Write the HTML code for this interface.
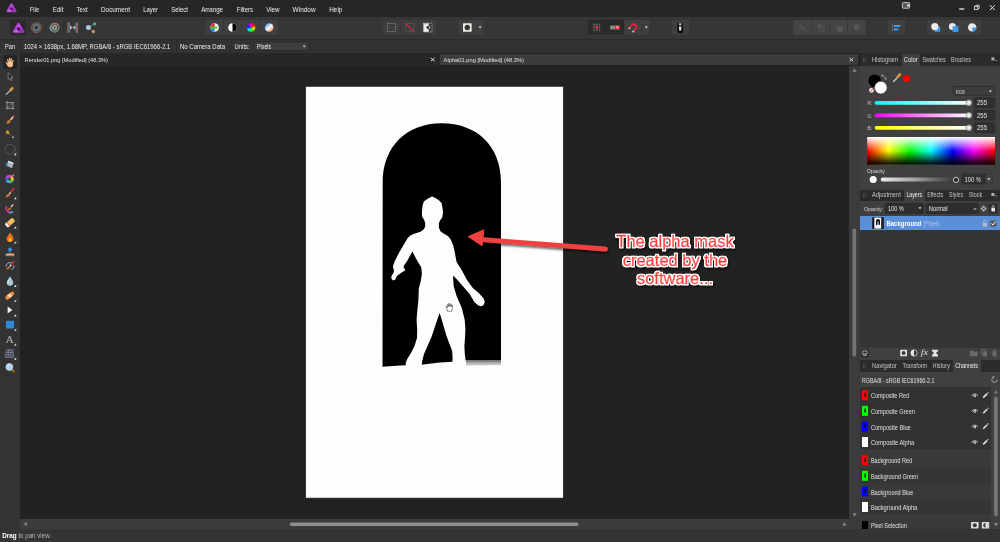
<!DOCTYPE html>
<html lang="en"><head><meta charset="utf-8"><title>Affinity Photo</title>
<style>
*{box-sizing:border-box;margin:0;padding:0}
html,body{width:1000px;height:542px;overflow:hidden;background:#222;font-family:"Liberation Sans",sans-serif}
#app{position:relative;width:1000px;height:542px;overflow:hidden;background:#222}
.a{position:absolute}
svg{position:absolute;left:0;top:0;overflow:hidden;will-change:transform}
svg text{white-space:pre}
</style></head><body><div id="app">
<div class="a" style="left:20px;top:53px;width:840px;height:476px;background:#222222"></div>
<div class="a" style="left:20px;top:53px;width:419px;height:12.6px;background:#272727"></div>
<div class="a" style="left:849px;top:66px;width:11px;height:453px;background:#3b3b3b"></div>
<div class="a" style="left:20px;top:519px;width:829px;height:10px;background:#3c3c3c"></div>
<div class="a" style="left:849px;top:519px;width:11px;height:10px;background:#3b3b3b"></div>
<div class="a" style="left:0px;top:529px;width:1000px;height:13px;background:#343434"></div>
<div class="a" style="left:0px;top:0px;width:1000px;height:17px;background:#262626"></div>
<div class="a" style="left:0px;top:17px;width:1000px;height:21.5px;background:#363636"></div>
<div class="a" style="left:0px;top:38.5px;width:1000px;height:1px;background:#2a2a2a"></div>
<div class="a" style="left:0px;top:39.5px;width:1000px;height:13.5px;background:#323232"></div>
<div class="a" style="left:0px;top:53px;width:20px;height:476px;background:#333333"></div>
<div class="a" style="left:860px;top:53px;width:140px;height:476px;background:#404040"></div>
<div class="a" style="left:860px;top:53px;width:140px;height:12.6px;background:#2b2b2b"></div>
<div class="a" style="left:901.6px;top:53.6px;width:18.6px;height:12px;background:#404040"></div>
<div class="a" style="left:860px;top:189.6px;width:140px;height:11.4px;background:#2b2b2b"></div>
<div class="a" style="left:904px;top:190px;width:21px;height:11px;background:#404040"></div>
<div class="a" style="left:860px;top:216px;width:140px;height:132.4px;background:#353535"></div>
<div class="a" style="left:860px;top:216px;width:140px;height:14.2px;background:#5b8fd8"></div>
<div class="a" style="left:860px;top:348.4px;width:140px;height:11.4px;background:#404040"></div>
<div class="a" style="left:860px;top:359.8px;width:140px;height:12px;background:#2b2b2b"></div>
<div class="a" style="left:953px;top:360.2px;width:28px;height:11.6px;background:#404040"></div>
<div class="a" style="left:860px;top:387.2px;width:130.6px;height:141.8px;background:#323232"></div>
<div class="a" style="left:860px;top:450px;width:130.6px;height:2.4px;background:#3c3c3c"></div>
<div class="a" style="left:860px;top:452.4px;width:130.6px;height:15.6px;background:#3a3a3a"></div>
<div class="a" style="left:860px;top:468px;width:130.6px;height:15.6px;background:#353535"></div>
<div class="a" style="left:860px;top:483.6px;width:130.6px;height:15.6px;background:#3a3a3a"></div>
<div class="a" style="left:860px;top:499.2px;width:130.6px;height:16px;background:#353535"></div>
<div class="a" style="left:860px;top:517.8px;width:130.6px;height:11.2px;background:#3a3a3a"></div>
<div class="a" style="left:860px;top:515.2px;width:130.6px;height:2.6px;background:#3c3c3c"></div>
<svg width="1000" height="542" viewBox="0 0 1000 542" font-family="'Liberation Sans',sans-serif">
<defs>
  <filter id="ol" x="-10%" y="-20%" width="120%" height="150%"><feMorphology in="SourceAlpha" operator="dilate" radius="1.1" result="d"/><feGaussianBlur in="d" stdDeviation="0.35" result="d2"/><feComponentTransfer in="d2" result="d3"><feFuncA type="linear" slope="1.6"/></feComponentTransfer><feFlood flood-color="#ffffff"/><feComposite in2="d3" operator="in" result="w"/><feGaussianBlur in="d" stdDeviation="1.2"/><feOffset dx="1" dy="1.5"/><feComponentTransfer result="s"><feFuncA type="linear" slope="0.6"/></feComponentTransfer><feMerge><feMergeNode in="s"/><feMergeNode in="w"/><feMergeNode in="SourceGraphic"/></feMerge></filter>
  <linearGradient id="gb2" x1="0" y1="0" x2="0" y2="1"><stop offset="0" stop-color="#6a6a6a"/><stop offset="0.45" stop-color="#b4b4b4"/><stop offset="1" stop-color="#c8c8c8"/></linearGradient>
  <filter id="sh" x="-20%" y="-50%" width="140%" height="220%"><feGaussianBlur in="SourceAlpha" stdDeviation="1.2"/><feOffset dx="1" dy="1.5"/><feComponentTransfer><feFuncA type="linear" slope="0.6"/></feComponentTransfer><feMerge><feMergeNode/><feMergeNode in="SourceGraphic"/></feMerge></filter>
  <filter id="bl"><feGaussianBlur stdDeviation="0.45"/></filter>
<filter id="b3" x="-10%" y="-10%" width="120%" height="120%"><feGaussianBlur stdDeviation="0.3"/></filter><linearGradient id="wb" x1="0.15" y1="0.1" x2="0.85" y2="0.9"><stop offset="0" stop-color="#3b9cf0"/><stop offset="0.5" stop-color="#fdfdfd"/><stop offset="1" stop-color="#f08a3c"/></linearGradient><linearGradient id="gr"><stop offset="0" stop-color="#00ffff"/><stop offset="1" stop-color="#ffffff"/></linearGradient>
<linearGradient id="gg"><stop offset="0" stop-color="#ff00ff"/><stop offset="1" stop-color="#ffffff"/></linearGradient>
<linearGradient id="gb"><stop offset="0" stop-color="#ffff00"/><stop offset="1" stop-color="#ffffff"/></linearGradient>
<linearGradient id="op"><stop offset="0" stop-color="#f0f0f0"/><stop offset="0.5" stop-color="#c8c8c8" stop-opacity="0.7"/><stop offset="1" stop-color="#aaaaaa" stop-opacity="0.02"/></linearGradient>
<linearGradient id="spec"><stop offset="0" stop-color="#ff0000"/><stop offset="0.1667" stop-color="#ffff00"/><stop offset="0.3333" stop-color="#00ff00"/><stop offset="0.5" stop-color="#00ffff"/><stop offset="0.6667" stop-color="#0000ff"/><stop offset="0.8333" stop-color="#ff00ff"/><stop offset="1" stop-color="#ff0000"/></linearGradient>
<linearGradient id="specv" x1="0" y1="0" x2="0" y2="1"><stop offset="0" stop-color="#fff" stop-opacity="1"/><stop offset="0.5" stop-color="#fff" stop-opacity="0"/><stop offset="0.5" stop-color="#000" stop-opacity="0"/><stop offset="1" stop-color="#000" stop-opacity="1"/></linearGradient></defs>

 <rect x="305.7" y="86.3" width="257.6" height="411.8" fill="#fdfdfd" stroke="#151515" stroke-width="0.6" filter="url(#bl)"/>
 <g filter="url(#bl)">
 <path d="M382.5 366.8 L382.7 182 C382.8 146.5 406.5 123.2 441.6 123.2 C477 123.2 501 146 501 182 L501 360.5 L466 360.6 L453 361.8 L440 362.4 L421 364.8 L400 365.6 Z" fill="#000"/>
 <path d="M465.6 360.8 L501 360.8 L501 365.1 L466 365.5 Z" fill="url(#gb2)"/>
 <path fill="#fdfdfd" d="M432.1 196.4 L435.4 198 L438.8 200.3 L441.6 203 L442.5 207.7 L443 212.7 L442.2 217.4 L440 220.5 L438.9 223.2 L438.9 227.7 L440.4 231.3 L444.3 234 L448.2 236.3 L450.9 239.8 L453.2 245.4 L454.5 251 L456.6 262 L461.8 270.3 L467 280 L472.8 288 L478.7 293 L483.5 298.3 L484.8 302 L483.4 305.2 L481 306.2 L478.4 305.6 L474.3 302 L470 294.6 L462.5 285.8 L457 279.4 L453 275.4 L453.6 285.8 L456.6 296 L461.8 308 L464.7 319.8 L465.4 329 L465 338 L464.4 346 L464.8 354 L465.8 362 L466 368 L452 368 L452.6 358 L452.2 351 L449.5 344 L446.5 336 L443.6 326 L440.6 316 L439.6 313 L437.5 319 L434.5 328 L431.5 337 L427.5 346 L424 354 L422.2 361 L421.6 368 L405.6 368 L405.8 362.5 L407.5 358.5 L411 353 L414.5 346 L417 338 L417.2 330 L416.6 320 L417.4 310 L418.4 300 L418.6 294.7 L418.8 288.2 L420.6 281.8 L421.9 274 L421.3 267.6 L417.4 261.1 L412.4 251.6 L409.6 256.4 L407.1 261.1 L404.6 264.8 L403.4 267 L405.4 270.2 L401.3 272.8 L396.9 276 L395.3 279.6 L393 280.6 L391.3 278.6 L391.5 276 L393.6 272.6 L394 270.6 L392.9 266.3 L394.8 261.1 L399.4 252.1 L403.9 244.4 L407.7 237.9 L410.4 235.6 L413.5 234 L416.6 233 L421 231.4 L423.8 229.2 L425.2 226.5 L425.2 222.7 L423.8 219.3 L422.1 216.6 L421.9 212.1 L422.6 205.5 L423.8 201.6 L427.7 198.8 L430 197.6 Z"/>
 </g>
 <g transform="translate(449.4 307.4)" filter="url(#bl)"><path d="M-1.8 3.8 L-2.8 1 L-3.6 -0.6 L-2.8 -1 L-1.8 0.2 L-2 -2.8 L-1.2 -3 L-0.8 -0.8 L-0.6 -3.8 L0.3 -3.8 L0.5 -0.8 L1 -3.4 L1.8 -3.2 L1.8 -0.4 L2.6 -2.2 L3.3 -1.9 L2.9 1.4 L2.2 3.8 Z" fill="#fff" stroke="#222" stroke-width="0.7" stroke-linejoin="round" stroke-dasharray="1.4 0.5"/></g>
 <g filter="url(#sh)">
  <path d="M605.4 249 L480 239.4" stroke="#f0413f" stroke-width="4.9" stroke-linecap="round" fill="none"/>
  <path d="M468.2 236.6 L483.8 229.8 L482 245.6 Z" fill="#f0413f" stroke="#f0413f" stroke-width="1" stroke-linejoin="round"/>
 </g>
 <g filter="url(#ol)" font-size="16.5" text-anchor="middle" fill="#ff3a3a" stroke="#ff3a3a" stroke-width="0.45" stroke-linejoin="round">
  <text x="675" y="247.3">The alpha mask</text>
  <text x="675" y="265.8">created by the</text>
  <text x="675" y="284.2">software...</text>
 </g>

<rect x="439.8" y="53.9" width="418.4" height="11" fill="#3c3c3c"/>
<text x="24.6" y="62.4" textLength="83.4" lengthAdjust="spacingAndGlyphs" font-size="6.1" fill="#e2e2e2">Render01.png [Modified] (48.3%)</text>
<text x="443.6" y="62.4" textLength="80.4" lengthAdjust="spacingAndGlyphs" font-size="6.1" fill="#e2e2e2">Alpha01.png [Modified] (48.3%)</text>
<path d="M430.9 58 L434.6 61.2 M434.6 58 L430.9 61.2 M849.6 58 L853.3 61.2 M853.3 58 L849.6 61.2" stroke="#e8e8e8" stroke-width="0.9" fill="none"/>
<path d="M852.5 71.8 H856.5 L854.5 68.4 Z" fill="#8a8a8a"/><path d="M852.5 513.2 H856.5 L854.5 516.8 Z" fill="#8a8a8a"/>
<rect x="852.4" y="228.6" width="3.8" height="128" rx="1.9" fill="#747474"/>
<path d="M27 522.1 V526.1 L23.2 524.1 Z" fill="#848484"/><path d="M843.2 522.6 V526.6 L846.8 524.6 Z" fill="#848484"/>
<rect x="290" y="522.4" width="288.4" height="3.6" rx="1.8" fill="#8e8e8e"/>
<text x="2.2" y="538.4" textLength="14.4" lengthAdjust="spacingAndGlyphs" font-size="6.8" fill="#ffffff" font-weight="bold">Drag</text>
<text x="18.4" y="538.4" textLength="32.6" lengthAdjust="spacingAndGlyphs" font-size="6.8" fill="#b4b4b4">to pan view.</text>
<g transform="translate(11.5 8) scale(0.95)"><path d="M0 -4.2 L4.4 3.4 L-4.4 3.4 Z" fill="#a83ccc" stroke="#a83ccc" stroke-width="2" stroke-linejoin="round"/><path d="M0 -4.4 L2.2 -0.6 L-2.2 -0.6 Z" fill="#c65ae4" opacity="0.8"/><path d="M-4.6 3.6 L-1.4 0.6 L-0.4 4 Z" fill="#d46cf0" opacity="0.9"/><path d="M4.6 3.6 L1.6 0.8 L0.6 4 Z" fill="#8a2cb0" opacity="0.9"/><circle cx="0" cy="0.8" r="1.5" fill="#42125a"/></g>
<text x="29.8" y="11.8" textLength="9.4" lengthAdjust="spacingAndGlyphs" font-size="6.8" fill="#eeeeee">File</text>
<text x="52.8" y="11.8" textLength="10.6" lengthAdjust="spacingAndGlyphs" font-size="6.8" fill="#eeeeee">Edit</text>
<text x="76.6" y="11.8" textLength="11.0" lengthAdjust="spacingAndGlyphs" font-size="6.8" fill="#eeeeee">Text</text>
<text x="101" y="11.8" textLength="29" lengthAdjust="spacingAndGlyphs" font-size="6.8" fill="#eeeeee">Document</text>
<text x="143.2" y="11.8" textLength="14.8" lengthAdjust="spacingAndGlyphs" font-size="6.8" fill="#eeeeee">Layer</text>
<text x="171.2" y="11.8" textLength="16.8" lengthAdjust="spacingAndGlyphs" font-size="6.8" fill="#eeeeee">Select</text>
<text x="201.2" y="11.8" textLength="21.8" lengthAdjust="spacingAndGlyphs" font-size="6.8" fill="#eeeeee">Arrange</text>
<text x="236.8" y="11.8" textLength="16.2" lengthAdjust="spacingAndGlyphs" font-size="6.8" fill="#eeeeee">Filters</text>
<text x="266.2" y="11.8" textLength="13.4" lengthAdjust="spacingAndGlyphs" font-size="6.8" fill="#eeeeee">View</text>
<text x="292.6" y="11.8" textLength="23.0" lengthAdjust="spacingAndGlyphs" font-size="6.8" fill="#eeeeee">Window</text>
<text x="329.2" y="11.8" textLength="13.2" lengthAdjust="spacingAndGlyphs" font-size="6.8" fill="#eeeeee">Help</text>
<g fill="none" stroke="#d0d0d0" stroke-width="0.9"><rect x="902.4" y="2.6" width="7.2" height="5.6" rx="0.8" fill="#555"/><rect x="907" y="4.4" width="2.6" height="2" fill="#ddd" stroke="none"/></g>
<path d="M959.2 9 H964.2" stroke="#e6e6e6" stroke-width="1.3"/>
<g fill="none" stroke="#d8d8d8" stroke-width="0.9"><rect x="974.4" y="6.4" width="3.4" height="3.2"/><path d="M975.8 6.2 V5.2 H979.2 V8.4 H978"/></g>
<path d="M990 5.2 L994.8 10 M994.8 5.2 L990 10" stroke="#e6e6e6" stroke-width="1" fill="none"/>
<rect x="10" y="19.8" width="16" height="15.6" rx="1" fill="#2a2a2a"/>
<rect x="28.4" y="21" width="0.8" height="13" fill="#2c2c2c"/>
<rect x="45.8" y="21" width="0.8" height="13" fill="#2c2c2c"/>
<rect x="63.4" y="21" width="0.8" height="13" fill="#2c2c2c"/>
<rect x="81.4" y="21" width="0.8" height="13" fill="#2c2c2c"/>
<g transform="translate(18.5 28.1) scale(1.08)"><path d="M0 -4.2 L4.4 3.4 L-4.4 3.4 Z" fill="#a83ccc" stroke="#a83ccc" stroke-width="2" stroke-linejoin="round"/><path d="M0 -4.4 L2.2 -0.6 L-2.2 -0.6 Z" fill="#c65ae4" opacity="0.8"/><path d="M-4.6 3.6 L-1.4 0.6 L-0.4 4 Z" fill="#d46cf0" opacity="0.9"/><path d="M4.6 3.6 L1.6 0.8 L0.6 4 Z" fill="#8a2cb0" opacity="0.9"/><circle cx="0" cy="0.8" r="1.5" fill="#42125a"/></g>
<g transform="translate(36.4 27.6)" fill="none" opacity="0.82"><circle r="5" stroke="#a8705a" stroke-width="0.9"/><circle r="3.9" stroke="#8c8a50" stroke-width="0.7" opacity="0.8"/><circle r="2.7" stroke="#7a94b4" stroke-width="1.3"/></g>
<g transform="translate(54.6 27.6)" fill="none" stroke-width="1.7" opacity="0.82"><circle r="4.1" stroke="#8a8a8a"/><path d="M-2.9 -2.9 A4.1 4.1 0 0 1 3.6 -2" stroke="#c07868"/><path d="M4 1 A4.1 4.1 0 0 1 -1.4 3.85" stroke="#7aa060"/><path d="M-2.4 3.3 A4.1 4.1 0 0 1 -3.6 -2" stroke="#88a4c8"/><circle r="2.5" fill="#c0c0c0" stroke="none"/><path d="M-0.8 -1.3 L1.4 0 L-0.8 1.3 Z" fill="#3a3a3a" stroke="none"/></g>
<g transform="translate(72.7 27.6)" opacity="0.85"><rect x="-5.4" y="-5.2" width="1.3" height="10.4" fill="#a87460"/><rect x="-4.1" y="-5.2" width="1.3" height="10.4" fill="#6d86a8"/><rect x="4.1" y="-5.2" width="1.3" height="10.4" fill="#a87460"/><rect x="2.8" y="-5.2" width="1.3" height="10.4" fill="#6d86a8"/><path d="M-2.6 -2.4 L0 0 L-2.6 2.4 Z M2.6 -2.4 L0 0 L2.6 2.4 Z" fill="#cfcfcf"/></g>
<g><path d="M88.6 27.6 L94.6 23.8 M88.6 27.6 L93.4 31.6" stroke="#8a8a8a" stroke-width="0.8"/><circle cx="88.4" cy="27.6" r="2.5" fill="#a9c4dc"/><circle cx="94.6" cy="23.9" r="1.7" fill="#53a898"/><circle cx="93.4" cy="31.6" r="1.6" fill="#d0a070"/></g>
<rect x="206" y="20" width="17.2" height="14.4" rx="0.6" fill="#3f3f3f"/>
<rect x="224" y="20" width="17.2" height="14.4" rx="0.6" fill="#3f3f3f"/>
<rect x="242" y="20" width="17.6" height="14.4" rx="0.6" fill="#3f3f3f"/>
<rect x="260.4" y="20" width="17.6" height="14.4" rx="0.6" fill="#3f3f3f"/>
<g transform="translate(214.6 27.5)"><circle r="4.3" fill="#f4f4f4"/><path d="M0 -4.3 A4.3 4.3 0 0 0 -4.3 0 L0 0 Z" fill="#ee2a4a"/><path d="M-4.3 0 A4.3 4.3 0 0 0 0 4.3 L0 0 Z" fill="#2a8de0"/><rect x="-4.6" y="-1.1" width="7.6" height="2" rx="0.6" fill="#5bc218"/></g>
<g transform="translate(232.5 27.5)"><circle r="4.3" fill="#fff"/><path d="M0 -4.3 A4.3 4.3 0 0 1 0 4.3 Z" fill="#000"/></g>
<g transform="translate(251 27.5)" filter="url(#b3)"><path d="M0 0 L0.00 -4.30 A4.3 4.3 0 0 1 2.33 -3.61 Z" fill="#ff0096"/><path d="M0 0 L2.15 -3.72 A4.3 4.3 0 0 1 3.83 -1.96 Z" fill="#ff0016"/><path d="M0 0 L3.72 -2.15 A4.3 4.3 0 0 1 4.29 0.21 Z" fill="#ff6800"/><path d="M0 0 L4.30 0.00 A4.3 4.3 0 0 1 3.61 2.33 Z" fill="#ffe800"/><path d="M0 0 L3.72 2.15 A4.3 4.3 0 0 1 1.96 3.83 Z" fill="#96ff00"/><path d="M0 0 L2.15 3.72 A4.3 4.3 0 0 1 -0.21 4.29 Z" fill="#16ff00"/><path d="M0 0 L0.00 4.30 A4.3 4.3 0 0 1 -2.33 3.61 Z" fill="#00ff68"/><path d="M0 0 L-2.15 3.72 A4.3 4.3 0 0 1 -3.83 1.96 Z" fill="#00ffe8"/><path d="M0 0 L-3.72 2.15 A4.3 4.3 0 0 1 -4.29 -0.21 Z" fill="#0096ff"/><path d="M0 0 L-4.30 0.00 A4.3 4.3 0 0 1 -3.61 -2.33 Z" fill="#0016ff"/><path d="M0 0 L-3.72 -2.15 A4.3 4.3 0 0 1 -1.96 -3.83 Z" fill="#6800ff"/><path d="M0 0 L-2.15 -3.72 A4.3 4.3 0 0 1 0.21 -4.29 Z" fill="#e800ff"/></g>
<circle cx="269.2" cy="27.5" r="4.3" fill="url(#wb)"/>
<rect x="382.4" y="20" width="17.6" height="14.4" rx="0.6" fill="#3d3d3d"/>
<rect x="400.8" y="20" width="17.6" height="14.4" rx="0.6" fill="#3d3d3d"/>
<rect x="419.2" y="20" width="17.0" height="14.4" rx="0.6" fill="#3d3d3d"/>
<rect x="387.4" y="23.4" width="8.2" height="8.2" fill="none" stroke="#8c8c8c" stroke-width="0.9" stroke-dasharray="1.6 1.1"/>
<rect x="405.6" y="23.4" width="8.2" height="8.2" fill="none" stroke="#6e6e6e" stroke-width="0.8" stroke-dasharray="1.4 1.3"/><path d="M405.4 23.2 L413.6 31.6" stroke="#d8283a" stroke-width="1.2"/>
<g><rect x="423.4" y="23.2" width="5.4" height="8.8" fill="#f0f0f0"/><path d="M428.8 25.2 L426 27.5 L428.8 29.8 Z" fill="#0c1830"/><path d="M428.8 25.2 L430 27.5 L428.8 29.8 Z" fill="#e8e8e8"/><rect x="423.4" y="23.2" width="8.6" height="8.8" fill="none" stroke="#d0d0d0" stroke-width="0.8" stroke-dasharray="1.2 1.4"/><rect x="423.8" y="23.6" width="4.6" height="8" fill="none" stroke="#444" stroke-width="0.5" stroke-dasharray="0.8 1.6"/></g>
<rect x="458.4" y="20" width="17.6" height="14.4" rx="0.6" fill="#3f3f3f"/>
<rect x="476.8" y="20" width="6.4" height="14.4" rx="0.6" fill="#3f3f3f"/>
<rect x="463" y="23.2" width="8.6" height="8.6" rx="0.6" fill="#ecece8"/><circle cx="467.3" cy="27.5" r="2.7" fill="#333"/>
<path d="M478.6 26.6 H481.6 L480.1 28.6 Z" fill="#e6e6e6"/>
<rect x="588" y="20" width="18" height="14.4" rx="0.6" fill="#2a2a2a"/>
<rect x="606.2" y="20" width="17.8" height="14.4" rx="0.6" fill="#2a2a2a"/>
<rect x="624.4" y="20" width="17.8" height="14.4" rx="0.6" fill="#3f3f3f"/>
<rect x="643" y="20" width="6.4" height="14.4" rx="0.6" fill="#3f3f3f"/>
<g stroke="#8a8a8a" stroke-width="0.7" fill="none" stroke-dasharray="1.3 0.7" opacity="0.85"><path d="M592.6 24.8 H601.2 M592.6 27.4 H601.2 M592.6 30 H601.2 M594.2 23.4 V31.8 M596.8 23.4 V31.8 M599.4 23.4 V31.8"/></g><rect x="595.6" y="26.2" width="2.4" height="2.4" fill="#ff2a2a"/>
<rect x="610.2" y="25.6" width="5" height="3.8" fill="#8a8a8a"/><rect x="615.2" y="25.2" width="4.6" height="4.6" fill="#e8303a"/><rect x="616.6" y="26.4" width="1.6" height="2" fill="#f4dede"/>
<g transform="translate(633.4 27.4) rotate(40)" fill="none"><path d="M-2.6 3.6 V-0.6 A2.6 2.6 0 0 1 2.6 -0.6 V3.6" stroke="#e0233c" stroke-width="1.8"/><path d="M-2.6 3.9 V2.6 M2.6 3.9 V2.6" stroke="#e8e8e8" stroke-width="1.8"/></g>
<path d="M644.8 26.6 H647.8 L646.3 28.6 Z" fill="#e6e6e6"/>
<rect x="671.4" y="20" width="17.8" height="14.4" rx="0.6" fill="#3f3f3f"/>
<g><rect x="677.4" y="23" width="5.6" height="10" rx="1.2" fill="#0a0a0a"/><path d="M679 26.4 H681.4 L681.2 30.6 H679.2 Z" fill="#f0f0f0"/><rect x="678.8" y="23.2" width="2.8" height="2" rx="0.6" fill="#b8b8b8"/></g>
<rect x="793.2" y="20" width="17.8" height="14.4" rx="0.6" fill="#444444"/>
<rect x="811.6" y="20" width="17.6" height="14.4" rx="0.6" fill="#444444"/>
<rect x="829.8" y="20" width="17.4" height="14.4" rx="0.6" fill="#444444"/>
<rect x="847.8" y="20" width="17.8" height="14.4" rx="0.6" fill="#444444"/>
<g fill="#525252"><rect x="799" y="24.6" width="3" height="3"/><rect x="801.6" y="26.8" width="3" height="3"/><rect x="817.4" y="24.2" width="3.6" height="3.6"/><rect x="820" y="27" width="4" height="4" fill="none" stroke="#525252" stroke-width="1"/><rect x="835.4" y="24.4" width="4" height="4" fill="none" stroke="#4e4e4e" stroke-width="0.8"/><rect x="837" y="26.4" width="5.4" height="5.4" fill="#555"/><rect x="854" y="24.6" width="5.4" height="5.4" fill="#565656"/></g>
<rect x="887.8" y="20" width="17.4" height="14.4" rx="0.6" fill="#3f3f3f"/>
<rect x="892.2" y="23.4" width="0.9" height="8.2" fill="#6a6a6a"/><rect x="893.8" y="25" width="6.4" height="1.9" fill="#42a5f5"/><rect x="893.8" y="28.4" width="4.4" height="1.9" fill="#42a5f5"/>
<rect x="927" y="20" width="18" height="14.4" rx="0.6" fill="#3f3f3f"/>
<rect x="945.6" y="20" width="17.6" height="14.4" rx="0.6" fill="#3f3f3f"/>
<rect x="963.8" y="20" width="17.4" height="14.4" rx="0.6" fill="#3f3f3f"/>
<rect x="934.6" y="26.6" width="5.6" height="5.2" fill="#3d9be9"/><circle cx="934.8" cy="26.6" r="3.6" fill="#ececec"/>
<circle cx="952.4" cy="26.6" r="3.5" fill="#ececec"/><rect x="952.6" y="26.2" width="5.8" height="5.8" fill="#3d9be9"/>
<circle cx="972.2" cy="27.4" r="4.2" fill="#ececec"/><path d="M972.4 27.6 H976.6 Q976.4 31.2 972.4 31.8 Z" fill="#3d9be9"/>
<text x="5" y="48.8" textLength="10.2" lengthAdjust="spacingAndGlyphs" font-size="6.8" fill="#eeeeee">Pan</text>
<text x="24" y="48.8" textLength="146.4" lengthAdjust="spacingAndGlyphs" font-size="6.8" fill="#eeeeee">1024 × 1638px, 1.68MP, RGBA/8 - sRGB IEC61966-2.1</text>
<text x="180" y="48.8" textLength="45" lengthAdjust="spacingAndGlyphs" font-size="6.8" fill="#eeeeee">No Camera Data</text>
<text x="234.6" y="48.8" textLength="15" lengthAdjust="spacingAndGlyphs" font-size="6.8" fill="#eeeeee">Units:</text>
<rect x="20.4" y="40.5" width="0.8" height="12" fill="#282828"/>
<rect x="176" y="40.5" width="0.8" height="12" fill="#282828"/>
<rect x="230.6" y="40.5" width="0.8" height="12" fill="#282828"/>
<rect x="254.6" y="42" width="53.6" height="8.6" rx="1" fill="#3e3e3e" stroke="#2a2a2a" stroke-width="0.7"/>
<text x="257" y="48.8" textLength="14.2" lengthAdjust="spacingAndGlyphs" font-size="6.8" fill="#eeeeee">Pixels</text>
<path d="M302.8 45.6 H305.6 L304.2 47.4 Z" fill="#e0e0e0"/>
<rect x="3.2" y="55.2" width="13.8" height="13.8" rx="1" fill="#242424"/>
<g stroke="#eeb080" stroke-width="1.35" stroke-linecap="round" fill="none"><path d="M8.6 63 L7.7 59.6 M9.8 62.6 L9.5 58.4 M10.9 62.6 L11.3 58.8 M11.9 63.4 L13.1 60.6 M8 65 L6.3 62.6"/><ellipse cx="10.1" cy="64.5" rx="2.9" ry="2.7" fill="#f4c4a0" stroke="none"/><path d="M8.4 66.4 Q10 67.6 11.8 66.6" stroke="#e8a070" stroke-width="0.8"/></g>
<g transform="translate(10.3 76.6) scale(0.9)"><path d="M-2.4 -4.2 L-2.4 3 L-0.6 1.6 L0.8 4.4 L2 3.8 L0.8 1 L3 0.8 Z" fill="#1c1c1c" stroke="#a0a0a0" stroke-width="0.75" stroke-linejoin="round"/></g>
<g><path d="M6.3 94.3 L10.2 90.5" stroke="#b8b8b8" stroke-width="1.2" stroke-linecap="round"/><path d="M10.7 89.9 L12.3 88.3" stroke="#cc9434" stroke-width="2.9" stroke-linecap="round"/></g>
<g transform="translate(10 105.4)" fill="none" stroke="#a8a8a8" stroke-width="0.8"><path d="M-2.9 -4.4 V4 M3 -3.4 V4.4 M-4.4 -2.8 H4.2 M-4.2 2.9 H4.4"/><path d="M-2.2 2.2 L2.2 -2.2" stroke-width="0.6"/></g>
<g transform="translate(10 120.2)"><path d="M-3.6 3.2 Q-2.6 -0.8 0.6 -0.6 Q1.4 2.4 -1.6 3.4 Q-3 3.8 -4.2 3.6 Z" fill="#c9752c"/><path d="M1 -1 L3.4 -3.6" stroke="#e4e4e4" stroke-width="1.6" stroke-linecap="round"/><path d="M3 -3.2 L3.8 -4" stroke="#e03030" stroke-width="1.6" stroke-linecap="round"/></g>
<g transform="translate(10 134)"><path d="M-1.4 -1.2 L3.4 3.6" stroke="#4a4a4a" stroke-width="1.3"/><path d="M2.6 2.8 L3.6 3.8" stroke="#e0e0e0" stroke-width="1.3"/><path d="M-2.6 -4.2 L-1.8 -2.6 L0 -2.8 L-1.2 -1.4 L-0.6 0.4 L-2.4 -0.6 L-4 0.4 L-3.6 -1.4 L-4.8 -2.6 L-3.2 -2.6 Z" fill="#e8a820"/></g>
<circle cx="10" cy="149.4" r="4.9" fill="none" stroke="#8a8a8a" stroke-width="0.8" stroke-dasharray="1.2 1"/><path d="M16.2 152.8 V155.20000000000002 H13.8 Z" fill="#e8e8e8"/>
<g transform="translate(10 164.4)"><path d="M-1.6 -3.6 L3.6 -1.4 L2 3.8 L-3.2 1.6 Z" fill="#a8b4bc"/><path d="M-1.6 -3.6 L3.6 -1.4 L3.2 -0.2 L-2 -2.4 Z" fill="#e4e8ea"/><path d="M-2 -2.6 Q-5 -1.6 -4.4 2.6 Q-3.4 0 -2.4 -0.6 Z" fill="#1e90e8"/></g>
<g transform="translate(9.6 179)"><circle r="4.2" fill="#888"/><path d="M0 0 L0 -4.2 A4.2 4.2 0 0 1 3.64 -2.1 Z" fill="#e83a3a"/><path d="M0 0 L3.64 -2.1 A4.2 4.2 0 0 1 3.64 2.1 Z" fill="#e8c020"/><path d="M0 0 L3.64 2.1 A4.2 4.2 0 0 1 0 4.2 Z" fill="#46c83a"/><path d="M0 0 L0 4.2 A4.2 4.2 0 0 1 -3.64 2.1 Z" fill="#28b8c8"/><path d="M0 0 L-3.64 2.1 A4.2 4.2 0 0 1 -3.64 -2.1 Z" fill="#3a58e0"/><path d="M0 0 L-3.64 -2.1 A4.2 4.2 0 0 1 0 -4.2 Z" fill="#c040d8"/><circle r="1.4" fill="#3a3a3a"/><path d="M0.6 -0.8 L4.6 -4.6" stroke="#dedede" stroke-width="1"/></g>
<g transform="translate(10 193)"><path d="M-4.4 4.4 Q-3.6 1 -1 0.6 L0.2 1.8 Q-0.6 4.2 -4.4 4.4 Z" fill="#c8782a"/><path d="M-0.6 0.8 L0.8 -0.8" stroke="#dcdcdc" stroke-width="1.6"/><path d="M1 -1.2 L3.6 -4.2" stroke="#e02c2c" stroke-width="1.7" stroke-linecap="round"/></g><path d="M16.2 196.8 V199.20000000000002 H13.8 Z" fill="#e8e8e8"/>
<g transform="translate(10 208.4)"><path d="M-3.4 -2.2 A4.4 4.4 0 0 0 2.4 3.6" fill="none" stroke="#e82a90" stroke-width="1.7"/><path d="M-1 4.2 A4.4 4.4 0 0 0 2.8 3.2" fill="none" stroke="#28c0d8" stroke-width="1.4"/><path d="M-2.2 1.4 Q-1.6 -1 0.8 -1 Q1.2 1.2 -0.6 1.8 Z" fill="#c8782a"/><path d="M1 -1.4 L3.4 -4" stroke="#dcdcdc" stroke-width="1.4"/><path d="M3 -3.6 L4 -4.6" stroke="#e02c2c" stroke-width="1.4"/></g>
<g transform="translate(10 222.6) rotate(-42)"><rect x="-5" y="-2.3" width="10" height="4.6" rx="1" fill="#f0c060"/><rect x="-5" y="-2.3" width="3.2" height="4.6" rx="1" fill="#f2f2f2"/><rect x="-2.6" y="-2.3" width="1" height="4.6" fill="#e05050"/></g><path d="M16.2 226.20000000000002 V228.60000000000002 H13.8 Z" fill="#e8e8e8"/>
<g transform="translate(10 237.4)"><path d="M-0.4 -5 Q3.8 -1.6 3.4 1.8 Q3 4.6 0 4.6 Q-3.4 4.6 -3.4 1.6 Q-3.4 -0.4 -1.8 -1.8 Q-0.6 -3 -0.4 -5 Z" fill="#f06a18"/><path d="M0 0 Q2 1.6 1.4 3.2 Q0.8 4.4 -0.2 4.4 Q-1.6 4.2 -1.4 2.6 Q-1.2 1.4 0 0 Z" fill="#f8c838"/></g><path d="M16.2 241.20000000000002 V243.60000000000002 H13.8 Z" fill="#e8e8e8"/>
<g transform="translate(10 252)"><circle cx="0" cy="-2.6" r="2" fill="#2c90e0"/><rect x="-0.7" y="-1" width="1.4" height="2.6" fill="#2c78c0"/><path d="M-3.8 1.4 H3.8 L4.4 3.4 H-4.4 Z" fill="#e8b088"/><rect x="-4.4" y="3.2" width="8.8" height="1" fill="#c87838"/></g>
<g transform="translate(10 265.6)"><path d="M-4 1 A4.2 4.2 0 0 1 3.4 -1.6" fill="none" stroke="#9ab0d0" stroke-width="1"/><path d="M4.2 0 A4.4 4.4 0 0 1 1.4 4" fill="none" stroke="#9ab0d0" stroke-width="1"/><path d="M-4 4 Q-3.2 1 -0.8 0.8 L0.2 1.8 Q-0.8 3.8 -4 4 Z" fill="#c8782a"/><path d="M-0.2 0.8 L1.4 -1" stroke="#dcdcdc" stroke-width="1.5"/><path d="M1.6 -1.4 L3.8 -4" stroke="#e02c2c" stroke-width="1.5" stroke-linecap="round"/></g>
<g transform="translate(10 281)"><path d="M0 -4.6 Q3.2 -0.6 3.2 1.6 A3.2 3.2 0 0 1 -3.2 1.6 Q-3.2 -0.6 0 -4.6 Z" fill="#a8c8d8"/><path d="M-1.4 -1 Q-2.2 0.8 -1.8 2.2" stroke="#e6f2f8" stroke-width="0.9" fill="none"/></g><path d="M16.2 284.59999999999997 V287.0 H13.8 Z" fill="#e8e8e8"/>
<g transform="translate(9.8 295.6) rotate(-40)"><rect x="-5.2" y="-2" width="10.4" height="4" rx="2" fill="#f28838"/><rect x="-1.8" y="-2" width="3.6" height="4" fill="#f8d0b0"/></g><path d="M16.2 299.4 V301.8 H13.8 Z" fill="#e8e8e8"/>
<path d="M7.6 306.4 L12.4 310 L7.6 313.4 Z" fill="#f2f2f2"/><path d="M16.2 314.0 V316.40000000000003 H13.8 Z" fill="#e8e8e8"/>
<rect x="6" y="320.8" width="8" height="7.6" rx="0.5" fill="#2f88dc"/><path d="M16.2 328.4 V330.8 H13.8 Z" fill="#e8e8e8"/>
<text x="5.6" y="343" textLength="8.4" lengthAdjust="spacingAndGlyphs" font-size="10.5" fill="#b8b8b8" font-family="'Liberation Serif',serif">A</text><path d="M16.2 343.2 V345.6 H13.8 Z" fill="#e8e8e8"/>
<g transform="translate(9.6 353.6)" fill="none" stroke="#9098b0" stroke-width="0.7"><path d="M-2.8 -3.8 H3.2 L4.2 3.8 H-4.4 Z M-3.4 -1.2 H3.6 M-3.8 1.4 H3.8 M-1 -3.8 L-1.6 3.8 M1.2 -3.8 L1.4 3.8"/></g><path d="M16.2 357.4 V359.8 H13.8 Z" fill="#e8e8e8"/>
<g transform="translate(9.4 367)"><path d="M2.4 2.6 L4.6 4.8" stroke="#d08030" stroke-width="1.4" stroke-linecap="round"/><circle r="3.4" fill="#a8d4f4" stroke="#d4d4d4" stroke-width="0.9"/><path d="M-1.8 -0.6 A2 2 0 0 1 0 -2" stroke="#fff" stroke-width="0.7" fill="none"/></g>
<path d="M863.6 57.4 V61.800000000000004 M865.2 57.4 V61.800000000000004" stroke="#5a5a5a" stroke-width="0.7"/>
<text x="872" y="62" textLength="26" lengthAdjust="spacingAndGlyphs" font-size="6.4" fill="#c4c4c4">Histogram</text>
<text x="903.8" y="62" textLength="13.8" lengthAdjust="spacingAndGlyphs" font-size="6.4" fill="#f0f0f0">Color</text>
<text x="922.4" y="62" textLength="23.2" lengthAdjust="spacingAndGlyphs" font-size="6.4" fill="#c4c4c4">Swatches</text>
<text x="951" y="62" textLength="20" lengthAdjust="spacingAndGlyphs" font-size="6.4" fill="#c4c4c4">Brushes</text>
<rect x="991.4" y="57.400000000000006" width="3" height="3" fill="#b0b0b0"/><path d="M995.0 60.0 H997.0 L996.0 61.2 Z" fill="#b0b0b0"/>
<circle cx="874.7" cy="80.8" r="6.3" fill="#000"/><circle cx="880.8" cy="87.6" r="6.3" fill="#fff" stroke="#3a3a3a" stroke-width="0.6"/>
<path d="M881.8 75.4 Q885.6 75.6 885.8 79" fill="none" stroke="#b8b8b8" stroke-width="0.7"/><path d="M880.8 75.4 L882.4 74.4 V76.4 Z M885.8 80.2 L884.8 78.6 H886.8 Z" fill="#b8b8b8"/>
<circle cx="871.4" cy="90.4" r="2.3" fill="#f4f4f4"/><path d="M869.8 92 L873 88.8" stroke="#e83030" stroke-width="1"/>
<g transform="translate(897.6 77.6)"><path d="M-4 3.8 L-0.2 -0.2" stroke="#c8c8c8" stroke-width="1.4" stroke-linecap="round"/><path d="M0.4 -1.2 L2.4 -3.2" stroke="#d09030" stroke-width="2.8" stroke-linecap="round"/></g>
<circle cx="906.6" cy="78.4" r="3.5" fill="#ff0000"/>
<rect x="953.3" y="86.5" width="41.3" height="8.8" rx="1.2" fill="#3c3c3c" stroke="#2c2c2c" stroke-width="0.8"/>
<text x="955.8" y="93.8" textLength="9" lengthAdjust="spacingAndGlyphs" font-size="6" fill="#d0d0d0">RGB</text>
<path d="M988.9 90.5 H991.9 L990.4 92.4 Z" fill="#e0e0e0"/>
<text x="867.4" y="105.2" textLength="4.6" lengthAdjust="spacingAndGlyphs" font-size="6" fill="#c8c8c8">R:</text>
<rect x="874.6" y="100.89999999999999" width="96" height="3.8" rx="1.9" fill="url(#gr)"/>
<circle cx="968.8" cy="102.8" r="2.8" fill="#d8d8d8" stroke="#9a9a9a" stroke-width="0.8"/><circle cx="968.8" cy="102.8" r="1.2" fill="#f6f6f6"/>
<rect x="974.2" y="97.7" width="20.6" height="10" rx="1.2" fill="#303030" stroke="#2a2a2a" stroke-width="0.7"/>
<text x="977" y="105.3" textLength="10" lengthAdjust="spacingAndGlyphs" font-size="6.6" fill="#e0e0e0">255</text>
<text x="867.4" y="117.7" textLength="4.6" lengthAdjust="spacingAndGlyphs" font-size="6" fill="#c8c8c8">G:</text>
<rect x="874.6" y="113.39999999999999" width="96" height="3.8" rx="1.9" fill="url(#gg)"/>
<circle cx="968.8" cy="115.3" r="2.8" fill="#d8d8d8" stroke="#9a9a9a" stroke-width="0.8"/><circle cx="968.8" cy="115.3" r="1.2" fill="#f6f6f6"/>
<rect x="974.2" y="110.2" width="20.6" height="10" rx="1.2" fill="#303030" stroke="#2a2a2a" stroke-width="0.7"/>
<text x="977" y="117.8" textLength="10" lengthAdjust="spacingAndGlyphs" font-size="6.6" fill="#e0e0e0">255</text>
<text x="867.4" y="130.2" textLength="4.6" lengthAdjust="spacingAndGlyphs" font-size="6" fill="#c8c8c8">B:</text>
<rect x="874.6" y="125.89999999999999" width="96" height="3.8" rx="1.9" fill="url(#gb)"/>
<circle cx="968.8" cy="127.8" r="2.8" fill="#d8d8d8" stroke="#9a9a9a" stroke-width="0.8"/><circle cx="968.8" cy="127.8" r="1.2" fill="#f6f6f6"/>
<rect x="974.2" y="122.7" width="20.6" height="10" rx="1.2" fill="#303030" stroke="#2a2a2a" stroke-width="0.7"/>
<text x="977" y="130.3" textLength="10" lengthAdjust="spacingAndGlyphs" font-size="6.6" fill="#e0e0e0">255</text>
<rect x="867.2" y="137" width="127.8" height="27.7" fill="url(#spec)"/>
<rect x="867.2" y="137" width="127.8" height="27.7" fill="url(#specv)"/>
<text x="866.8" y="172.9" textLength="18.2" lengthAdjust="spacingAndGlyphs" font-size="6.1" fill="#d8d8d8">Opacity</text>
<circle cx="873.2" cy="179.5" r="3.5" fill="#ffffff"/>
<rect x="880.8" y="177.6" width="71.6" height="3.8" rx="1.9" fill="url(#op)"/>
<circle cx="956" cy="179.9" r="2.7" fill="#2e2e2e" stroke="#e0e0e0" stroke-width="0.8"/>
<rect x="962" y="174.2" width="23" height="9.6" rx="1.2" fill="#303030" stroke="#2a2a2a" stroke-width="0.7"/>
<rect x="985.4" y="174.2" width="7" height="9.6" rx="1" fill="#444444" stroke="#2e2e2e" stroke-width="0.6"/>
<text x="964.6" y="182.2" textLength="16.2" lengthAdjust="spacingAndGlyphs" font-size="6.6" fill="#e4e4e4">100 %</text>
<path d="M987.3 178.29999999999998 H990.3 L988.8 180.2 Z" fill="#e0e0e0"/>
<path d="M863.6 193.0 V197.39999999999998 M865.2 193.0 V197.39999999999998" stroke="#5a5a5a" stroke-width="0.7"/>
<text x="872" y="197.4" textLength="28.8" lengthAdjust="spacingAndGlyphs" font-size="6.4" fill="#c4c4c4">Adjustment</text>
<text x="906.4" y="197.4" textLength="15.6" lengthAdjust="spacingAndGlyphs" font-size="6.4" fill="#f0f0f0">Layers</text>
<text x="927.2" y="197.4" textLength="16" lengthAdjust="spacingAndGlyphs" font-size="6.4" fill="#c4c4c4">Effects</text>
<text x="949" y="197.4" textLength="14" lengthAdjust="spacingAndGlyphs" font-size="6.4" fill="#c4c4c4">Styles</text>
<text x="968.8" y="197.4" textLength="13.4" lengthAdjust="spacingAndGlyphs" font-size="6.4" fill="#c4c4c4">Stock</text>
<rect x="991.4" y="193.0" width="3" height="3" fill="#b0b0b0"/><path d="M995.0 195.60000000000002 H997.0 L996.0 196.8 Z" fill="#b0b0b0"/>
<text x="864" y="211.2" textLength="19" lengthAdjust="spacingAndGlyphs" font-size="6.2" fill="#d8d8d8">Opacity:</text>
<rect x="885" y="203.6" width="38.4" height="9.8" rx="1.2" fill="#2e2e2e" stroke="#282828" stroke-width="0.7"/>
<text x="888" y="211.3" textLength="15.8" lengthAdjust="spacingAndGlyphs" font-size="6.6" fill="#e4e4e4">100 %</text>
<path d="M918.5 207.29999999999998 H921.5 L920 209.2 Z" fill="#e0e0e0"/>
<rect x="926.4" y="203.6" width="52.2" height="9.8" rx="1.2" fill="#2e2e2e" stroke="#282828" stroke-width="0.7"/>
<text x="928.8" y="211.3" textLength="18.8" lengthAdjust="spacingAndGlyphs" font-size="6.6" fill="#e4e4e4">Normal</text>
<path d="M973.6 209 H976.4" stroke="#e8e8e8" stroke-width="0.9"/>
<g transform="translate(983.6 208.6)"><circle r="1.8" fill="none" stroke="#d0d0d0" stroke-width="1"/><path d="M0 -2.9 V2.9 M-2.9 0 H2.9" stroke="#d0d0d0" stroke-width="0.8"/><circle r="1" fill="#3a3a3a"/></g>
<rect x="988.8" y="204" width="8.6" height="9.2" rx="1" fill="#2c2c2c"/>
<rect x="991.4" y="208" width="3.6" height="3.4" rx="0.4" fill="#e8e8e8"/><path d="M992.2 208 V206.6 A1 1 0 0 1 994.2 206.6 V208" fill="none" stroke="#e8e8e8" stroke-width="0.7"/>
<rect x="872.2" y="217.3" width="11.5" height="11.6" fill="#141414"/>
<rect x="881" y="217.3" width="2.7" height="11.6" fill="#262626"/>
<rect x="874.3" y="217.6" width="6.8" height="11" fill="#fafafa"/>
<path d="M876 224.9 V221 Q876 219 878 219 Q880 219 880 221 V224.7 Z" fill="#0c0c0c"/><path d="M877.3 224.9 L877.5 222.8 L877 222.2 L877.9 221.2 L878.7 222.2 L878.5 223 L879 224.8 Z" fill="#c8c8c8"/>
<text x="886.4" y="225.8" textLength="35" lengthAdjust="spacingAndGlyphs" font-size="6.8" fill="#ffffff" font-weight="bold">Background</text>
<text x="923.2" y="225.8" textLength="16" lengthAdjust="spacingAndGlyphs" font-size="6.8" fill="#a9c6f2">(Pixel)</text>
<rect x="982.8" y="223" width="4.2" height="3.6" rx="0.4" fill="#b4bcc8"/><path d="M983.7 223 V221.3 A1.25 1.25 0 0 1 986.2 221.3 V222" fill="none" stroke="#b4bcc8" stroke-width="0.8"/>
<rect x="990.3" y="220.5" width="6" height="6.1" rx="0.8" fill="#565656" stroke="#6c7480" stroke-width="0.4"/>
<path d="M991.6 223.4 L993 225 L995.4 221.6" fill="none" stroke="#ffffff" stroke-width="1"/>
<rect x="860.8" y="349" width="8.2" height="8.6" rx="1" fill="#2c2c2c"/>
<ellipse cx="864.8" cy="352.4" rx="2.6" ry="1.6" fill="none" stroke="#c0c0c0" stroke-width="0.9"/><path d="M862.4 354.8 Q864.8 356.6 867.2 354.8" fill="none" stroke="#c0c0c0" stroke-width="0.9"/>
<rect x="900.2" y="349.8" width="6.8" height="6.4" rx="0.6" fill="#e4e4e4"/><circle cx="903.6" cy="353" r="2" fill="#3a3a3a"/>
<circle cx="914" cy="353" r="3.2" fill="#e4e4e4"/><path d="M914 349.8 A3.2 3.2 0 0 1 914 356.2 Z" fill="#3a3a3a"/><circle cx="914" cy="353" r="3.2" fill="none" stroke="#e4e4e4" stroke-width="0.6"/>
<text x="920.8" y="355.4" textLength="7.2" lengthAdjust="spacingAndGlyphs" font-size="7.6" fill="#e4e4e4" font-style="italic" font-family="'Liberation Serif',serif">fx</text>
<path d="M932 349.8 H938 V351 L936 353 L938 355 V356.4 H932 V355 L934 353 L932 351 Z" fill="#e4e4e4"/>
<path d="M970 350.6 H973 L973.8 351.6 H977.6 V356.2 H970 Z" fill="#6a6a6a"/>
<rect x="981.4" y="349.6" width="4" height="5" fill="none" stroke="#6a6a6a" stroke-width="0.8"/><rect x="983" y="351.2" width="4" height="5.2" fill="#6a6a6a"/>
<path d="M992 351 H997 M993.4 350.2 H995.6" stroke="#6a6a6a" stroke-width="0.8"/><path d="M992.4 351.6 H996.6 L996.2 356.6 H992.8 Z" fill="#6a6a6a"/>
<path d="M863.6 363.40000000000003 V367.8 M865.2 363.40000000000003 V367.8" stroke="#5a5a5a" stroke-width="0.7"/>
<text x="872" y="368" textLength="24.8" lengthAdjust="spacingAndGlyphs" font-size="6.4" fill="#c4c4c4">Navigator</text>
<text x="902.4" y="368" textLength="24.8" lengthAdjust="spacingAndGlyphs" font-size="6.4" fill="#c4c4c4">Transform</text>
<text x="932.6" y="368" textLength="17.4" lengthAdjust="spacingAndGlyphs" font-size="6.4" fill="#c4c4c4">History</text>
<text x="955.2" y="368" textLength="22.8" lengthAdjust="spacingAndGlyphs" font-size="6.4" fill="#f0f0f0">Channels</text>
<text x="862" y="382.6" textLength="72.4" lengthAdjust="spacingAndGlyphs" font-size="6.4" fill="#e0e0e0">RGBA/8 - sRGB IEC61966-2.1</text>
<path d="M993.4 377.2 A2.7 2.7 0 1 0 997.2 379.6" fill="none" stroke="#bcbcbc" stroke-width="0.8"/><path d="M992.4 376.6 L994.6 376.4 L993.6 378.4 Z" fill="#bcbcbc"/>
<rect x="862" y="390.2" width="6" height="10" fill="#ff0000"/>
<path d="M864.4 396.8 V394.0 Q864.4 392.59999999999997 865.2 392.59999999999997 Q866 392.59999999999997 866 394.0 V396.8 Z" fill="#000" opacity="0.8"/>
<text x="870.9" y="398.3" textLength="38.2" lengthAdjust="spacingAndGlyphs" font-size="6.6" fill="#e0e0e0">Composite Red</text>
<g transform="translate(974.8 395.2)"><path d="M-3.2 0.4 Q0 -3 3.2 0.4" fill="none" stroke="#d8d8d8" stroke-width="0.8"/><circle cx="0" cy="0.6" r="1.4" fill="#d8d8d8"/><circle cx="0" cy="0.6" r="0.5" fill="#303030"/></g>
<g transform="translate(985.6 395.2)"><path d="M-2.4 2.4 L1.6 -1.6" stroke="#e4e4e4" stroke-width="1.6"/><path d="M2.2 -2.2 L2.8 -2.8" stroke="#e4e4e4" stroke-width="1.4"/></g>
<rect x="862" y="405.8" width="6" height="10" fill="#00ff00"/>
<path d="M864.4 412.40000000000003 V409.6 Q864.4 408.2 865.2 408.2 Q866 408.2 866 409.6 V412.40000000000003 Z" fill="#000" opacity="0.8"/>
<text x="870.9" y="413.90000000000003" textLength="44" lengthAdjust="spacingAndGlyphs" font-size="6.6" fill="#e0e0e0">Composite Green</text>
<g transform="translate(974.8 410.8)"><path d="M-3.2 0.4 Q0 -3 3.2 0.4" fill="none" stroke="#d8d8d8" stroke-width="0.8"/><circle cx="0" cy="0.6" r="1.4" fill="#d8d8d8"/><circle cx="0" cy="0.6" r="0.5" fill="#303030"/></g>
<g transform="translate(985.6 410.8)"><path d="M-2.4 2.4 L1.6 -1.6" stroke="#e4e4e4" stroke-width="1.6"/><path d="M2.2 -2.2 L2.8 -2.8" stroke="#e4e4e4" stroke-width="1.4"/></g>
<rect x="862" y="421.4" width="6" height="10" fill="#0000ff"/>
<path d="M864.4 428.0 V425.2 Q864.4 423.79999999999995 865.2 423.79999999999995 Q866 423.79999999999995 866 425.2 V428.0 Z" fill="#000" opacity="0.8"/>
<text x="870.9" y="429.5" textLength="39.8" lengthAdjust="spacingAndGlyphs" font-size="6.6" fill="#e0e0e0">Composite Blue</text>
<g transform="translate(974.8 426.4)"><path d="M-3.2 0.4 Q0 -3 3.2 0.4" fill="none" stroke="#d8d8d8" stroke-width="0.8"/><circle cx="0" cy="0.6" r="1.4" fill="#d8d8d8"/><circle cx="0" cy="0.6" r="0.5" fill="#303030"/></g>
<g transform="translate(985.6 426.4)"><path d="M-2.4 2.4 L1.6 -1.6" stroke="#e4e4e4" stroke-width="1.6"/><path d="M2.2 -2.2 L2.8 -2.8" stroke="#e4e4e4" stroke-width="1.4"/></g>
<rect x="862" y="437" width="6" height="10" fill="#ffffff"/>
<text x="870.9" y="445.1" textLength="43.2" lengthAdjust="spacingAndGlyphs" font-size="6.6" fill="#e0e0e0">Composite Alpha</text>
<g transform="translate(974.8 442)"><path d="M-3.2 0.4 Q0 -3 3.2 0.4" fill="none" stroke="#d8d8d8" stroke-width="0.8"/><circle cx="0" cy="0.6" r="1.4" fill="#d8d8d8"/><circle cx="0" cy="0.6" r="0.5" fill="#303030"/></g>
<g transform="translate(985.6 442)"><path d="M-2.4 2.4 L1.6 -1.6" stroke="#e4e4e4" stroke-width="1.6"/><path d="M2.2 -2.2 L2.8 -2.8" stroke="#e4e4e4" stroke-width="1.4"/></g>
<rect x="862" y="455.2" width="6" height="10" fill="#ff0000"/>
<path d="M864.4 461.8 V459.0 Q864.4 457.59999999999997 865.2 457.59999999999997 Q866 457.59999999999997 866 459.0 V461.8 Z" fill="#000" opacity="0.8"/>
<text x="870.9" y="463.3" textLength="41.2" lengthAdjust="spacingAndGlyphs" font-size="6.6" fill="#e0e0e0">Background Red</text>
<rect x="862" y="470.8" width="6" height="10" fill="#00ff00"/>
<path d="M864.4 477.40000000000003 V474.6 Q864.4 473.2 865.2 473.2 Q866 473.2 866 474.6 V477.40000000000003 Z" fill="#000" opacity="0.8"/>
<text x="870.9" y="478.90000000000003" textLength="47.2" lengthAdjust="spacingAndGlyphs" font-size="6.6" fill="#e0e0e0">Background Green</text>
<rect x="862" y="486.4" width="6" height="10" fill="#0000ff"/>
<path d="M864.4 493.0 V490.2 Q864.4 488.79999999999995 865.2 488.79999999999995 Q866 488.79999999999995 866 490.2 V493.0 Z" fill="#000" opacity="0.8"/>
<text x="870.9" y="494.5" textLength="42.6" lengthAdjust="spacingAndGlyphs" font-size="6.6" fill="#e0e0e0">Background Blue</text>
<rect x="862" y="502" width="6" height="10" fill="#ffffff"/>
<text x="870.9" y="510.1" textLength="46.4" lengthAdjust="spacingAndGlyphs" font-size="6.6" fill="#e0e0e0">Background Alpha</text>
<rect x="862" y="521" width="6" height="8" fill="#000000"/>
<text x="870.9" y="528" textLength="36" lengthAdjust="spacingAndGlyphs" font-size="6.6" fill="#e0e0e0">Pixel Selection</text>
<rect x="971" y="522" width="7.6" height="6.4" rx="0.6" fill="#dcdcdc"/><circle cx="974.8" cy="525.2" r="2" fill="#3a3a3a"/>
<rect x="981.8" y="522" width="7.4" height="6.4" rx="0.6" fill="#dcdcdc"/><circle cx="985.5" cy="525.2" r="2.2" fill="#3a3a3a"/><path d="M985.5 523 A2.2 2.2 0 0 1 985.5 527.4 Z" fill="#f4f4f4"/>
<rect x="994.1" y="396.6" width="3.6" height="120" rx="1.8" fill="#787878"/>
<path d="M993.9 393.4 H997.9 L995.9 390.2 Z" fill="#7c7c7c"/><path d="M993.9 523 H997.9 L995.9 526.6 Z" fill="#8a8a8a"/>
</svg>
</div></body></html>
